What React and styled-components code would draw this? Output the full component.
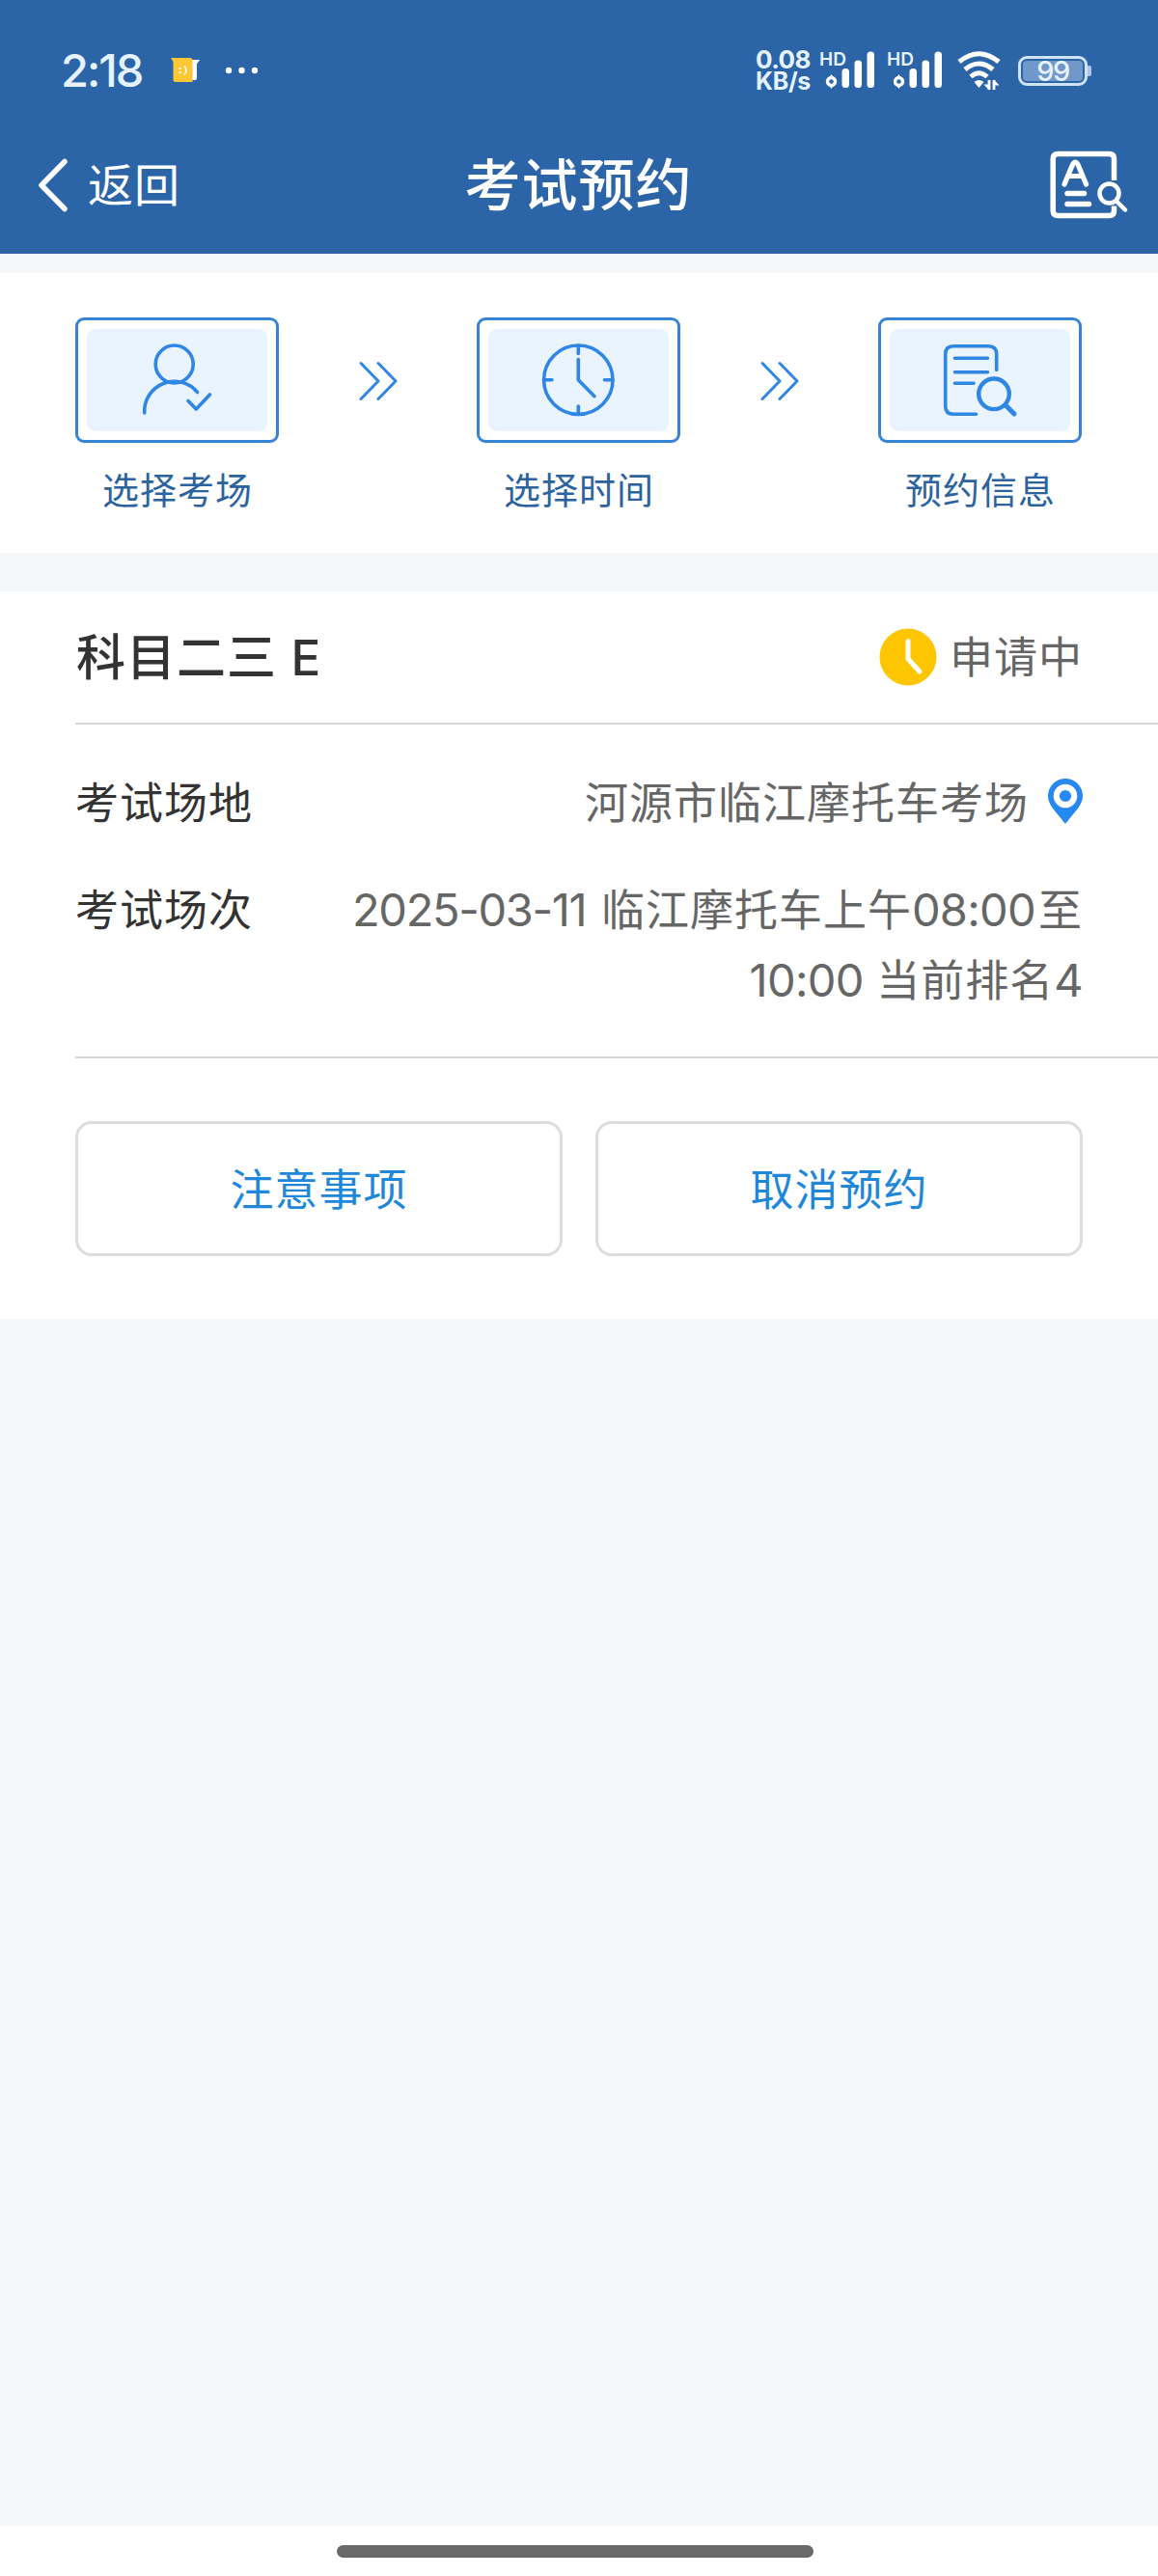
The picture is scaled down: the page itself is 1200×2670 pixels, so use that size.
import React from 'react';
import styled, { createGlobalStyle } from 'styled-components';

const colors = {
  header: '#2b65a8',
  page: '#f4f8fa',
  line: '#d8d8d8',
  icon: '#2f86e4',
  stepText: '#2c639f',
  link: '#1e87d9',
  dark: '#333',
  grey: '#666',
  status: '#e6f2ff',
};

const GlobalStyle = createGlobalStyle`
  * {
    box-sizing: border-box;
  }
  body {
    margin: 0;
    background: ${colors.page};
    font-family: Inter, 'Noto Sans CJK SC', sans-serif;
  }
`;

const Screen = styled.div`
  width: 1200px;
  height: 2670px;
  display: flex;
  flex-direction: column;
  background: ${colors.page};
`;

const Header = styled.header`
  height: 263px;
  background: ${colors.header};
  color: #fff;
`;

const StatusBar = styled.div`
  height: 120px;
  padding: 26px 69px 0 63px;
  display: flex;
  align-items: center;
  color: ${colors.status};
`;

const Time = styled.div`
  width: 114px;
  font-size: 47px;
  font-weight: 500;
  line-height: 50px;
  letter-spacing: -2px;
`;

const Dots = styled.svg`
  margin-left: 26px;
`;

const Speed = styled.div`
  width: 67px;
  margin-left: auto;
  font-size: 26px;
  font-weight: 700;
  line-height: 22px;
`;

const SpeedLine = styled.div`
  font-size: ${({ $size }) => $size}px;
  letter-spacing: ${({ $spacing }) => $spacing}px;
  white-space: nowrap;
`;

const SignalSvg = styled.svg`
  margin-right: ${({ $gap }) => $gap}px;
  overflow: visible;
`;

const Battery = styled.div`
  display: flex;
  align-items: center;
  margin-left: 17px;
`;

const BatteryBody = styled.div`
  width: 72px;
  height: 31px;
  padding: 2px;
  border: 3px solid #cfe3fb;
  border-radius: 9px;
`;

const BatteryLevel = styled.div`
  height: 21px;
  border-radius: 4px;
  background: #7098c8;
  color: ${colors.status};
  font-size: 29px;
  font-weight: 500;
  line-height: 21px;
  letter-spacing: -1.5px;
  text-align: center;
`;

const BatteryCap = styled.div`
  width: 4px;
  height: 11px;
  border-radius: 0 2px 2px 0;
  background: #a9c6e8;
`;

const NavBar = styled.div`
  height: 143px;
  padding: 0 30px 0 38px;
  display: grid;
  grid-template-columns: 1fr auto 1fr;
  align-items: center;
`;

const Back = styled.div`
  display: flex;
  align-items: center;
  gap: 19px;
  font-size: 47px;
  line-height: 60px;
  letter-spacing: 1px;
`;

const Title = styled.h1`
  margin: 0;
  padding-right: 9px;
  font-size: 58px;
  font-weight: 500;
  line-height: 80px;
  letter-spacing: 1px;
`;

const SearchIcon = styled.svg`
  justify-self: end;
`;

const Steps = styled.section`
  height: 290px;
  margin-top: 20px;
  padding: 46px 79px 0 78px;
  display: flex;
  align-items: flex-start;
  justify-content: space-between;
  background: #fff;
`;

const StepItem = styled.div`
  width: 211px;
  text-align: center;
`;

const StepBox = styled.div`
  height: 130px;
  padding: 9px;
  border: 3px solid #3584d6;
  border-radius: 9px;
`;

const StepInner = styled.div`
  height: 106px;
  border-radius: 9px;
  background: #e9f4ff;
`;

const StepLabel = styled.div`
  margin-top: 23px;
  padding-left: 1px;
  color: ${colors.stepText};
  font-size: 38px;
  line-height: 52px;
  letter-spacing: 1px;
  white-space: nowrap;
`;

const Arrows = styled.svg`
  margin-top: 44px;
`;

const Card = styled.section`
  height: 754px;
  margin-top: 40px;
  padding-left: 78px;
  background: #fff;
`;

const CardHead = styled.div`
  height: 138px;
  padding: 2px 78px 0 1px;
  display: flex;
  align-items: center;
  justify-content: space-between;
  border-bottom: 2px solid ${colors.line};
`;

const Subject = styled.h2`
  margin: 0;
  color: ${colors.dark};
  font-size: 51px;
  font-weight: 500;
  line-height: 70px;
  letter-spacing: 1px;
`;

const Status = styled.div`
  display: flex;
  align-items: center;
  gap: 13px;
  color: ${colors.grey};
  font-size: 45px;
  line-height: 60px;
  letter-spacing: 1px;
`;

const StatusIcon = styled.svg`
  margin-bottom: 2px;
`;

const Details = styled.dl`
  height: 346px;
  margin: 0;
  padding: 45px 78px 0 0;
  display: flex;
  flex-direction: column;
  gap: 38px;
  border-bottom: 2px solid ${colors.line};
  font-size: 45px;
  line-height: 73px;
  letter-spacing: 1px;
`;

const DetailRow = styled.div`
  display: flex;
  justify-content: space-between;
`;

const Label = styled.dt`
  color: ${colors.dark};
`;

const Value = styled.dd`
  margin: 0;
  display: flex;
  align-items: center;
  gap: 20px;
  color: ${colors.grey};
`;

const Pin = styled.svg`
  margin-bottom: 4px;
`;

const Session = styled.div`
  line-height: 72px;
  text-align: right;
  white-space: nowrap;
`;

const Num = styled.span`
  margin-right: ${({ $gap = 0 }) => $gap}px;
  font-size: 47px;
  letter-spacing: ${({ $spacing = -0.7 }) => $spacing}px;
`;

const Actions = styled.div`
  padding: 65px 78px 0 0;
  display: grid;
  grid-template-columns: 1fr 1fr;
  gap: 34px;
`;

const ActionButton = styled.button`
  height: 140px;
  padding: 0 0 4px;
  border: 3px solid #dcdcdc;
  border-radius: 17px;
  background: #fff;
  color: ${colors.link};
  font-family: inherit;
  font-size: 45px;
  letter-spacing: 1px;
`;

const HomeBar = styled.footer`
  height: 52px;
  margin-top: auto;
  padding: 20px 8px 0 0;
  background: #fff;
`;

const HomeIndicator = styled.div`
  width: 494px;
  height: 13px;
  margin: 0 auto;
  border-radius: 7px;
  background: #696969;
`;

const NoteIcon = () => (
  <svg width="30" height="26" viewBox="0 0 30 26">
    <path d="M20 2h10l-3 4v15q0 2-2 2h-5z" fill="#fff" />
    <path d="M0 0h20q2.500 0 2.500 2.500V25H5q-2.500 0-2.500-2.500V4z" fill="#fdc834" />
    <path d="M8 11h3M8 15h3M14 8.500q4 4.500 0 9" stroke="#fff" strokeWidth="1.500" fill="none" />
  </svg>
);

const Signal = ({ gap }) => (
  <SignalSvg $gap={gap} width="57" height="42" viewBox="0 0 57 42" fill={colors.status}>
    <text x="-1" y="16" fontSize="19" fontWeight="600">HD</text>
    <circle cx="11.500" cy="32.500" r="4" fill="none" stroke="#fff" strokeWidth="3.400" />
    <path d="M9.500 28l2-3 2 3zM9.500 37l2 3 2-3z" fill="#fff" />
    <g fill="#fff">
      <rect x="22.500" y="19" width="7.500" height="20" rx="3.500" />
      <rect x="35.500" y="10.500" width="7.500" height="28.500" rx="3.500" />
      <rect x="48.500" y="1.500" width="7.500" height="37.500" rx="3.500" />
    </g>
  </SignalSvg>
);

const Wifi = () => (
  <svg width="46" height="42" viewBox="0 0 46 42" fill="none" stroke="#fff" strokeWidth="5">
    <path d="M2 12Q22.500-4.500 43 12" />
    <path d="M8 20Q22.500 8 37 20" />
    <path d="M14 27.500Q22.500 20 31 27.500" />
    <path d="M17.500 33q5-4 10 0l-5 6z" fill="#fff" stroke="none" />
    <path d="M33 31v10M38 41V31" strokeWidth="2.800" />
    <path d="M33 41.500l-5.500-6H33zM38 30.500l5.500 6H38z" fill="#fff" stroke="none" />
  </svg>
);

const DocSearchIcon = () => (
  <SearchIcon width="82" height="72" viewBox="0 0 82 72" fill="none" stroke="#fff" strokeLinecap="round">
    <path
      d="M66.500 31V8.500q0-5-5-5H8.500Q3.200 3.500 3.200 8.500v54q0 5 5.300 5h53q5 0 5-5v-5"
      strokeWidth="5.500"
      strokeLinecap="butt"
    />
    <path
      d="M15 35L23.500 14.500Q26.300 9.500 29 14.500L37.500 35M20 26.500H33"
      strokeWidth="5.200"
      strokeLinejoin="round"
    />
    <path d="M18 44.500h17.500M18 55.500h22.500" strokeWidth="5.500" />
    <circle cx="61.500" cy="44.500" r="10" strokeWidth="4.500" />
    <path d="M69.500 53l8.500 8.500" strokeWidth="4.500" />
  </SearchIcon>
);

const StepIcon = ({ children }) => (
  <svg
    width="187"
    height="106"
    viewBox="0 0 187 106"
    fill="none"
    stroke={colors.icon}
    strokeWidth="3.600"
    strokeLinecap="round"
    strokeLinejoin="round"
  >
    {children}
  </svg>
);

const UserCheck = () => (
  <StepIcon>
    <circle cx="90.700" cy="36.500" r="19.500" />
    <path d="M59.700 87A31 31 0 0 1 114.500 65.500" />
    <path d="M105 74.500l8.300 8.500L127.500 68" />
  </StepIcon>
);

const Clock = () => (
  <StepIcon>
    <circle cx="93.300" cy="52.700" r="35.700" />
    <path d="M93.300 17v8.500M93.300 80v8.500M57.500 52.700h8.500M120.500 52.700h8.500" />
    <path d="M93.300 31.500v21.200l16.700 17" />
  </StepIcon>
);

const FormSearch = () => (
  <StepIcon>
    <path d="M110.700 42.500V26q0-8.300-8.300-8.300H66q-8.300 0-8.300 8.300v54q0 8.300 8.300 8.300h23.500" />
    <path d="M67.500 30.200h34M67.500 44.700h34M67.500 56.200h19.500" />
    <circle cx="108" cy="67.300" r="15.800" strokeWidth="4.400" />
    <path d="M120 79l9 9" strokeWidth="5" />
  </StepIcon>
);

const DoubleArrow = () => (
  <Arrows
    width="42"
    height="42"
    viewBox="0 0 42 42"
    fill="none"
    stroke={colors.icon}
    strokeWidth="3"
    strokeLinecap="round"
    strokeLinejoin="round"
  >
    <path d="M3 3.500l18 18.500L3 40.500M21 3.500l18 18.500L21 40.500" />
  </Arrows>
);

const PendingIcon = () => (
  <StatusIcon width="60" height="60" viewBox="0 0 60 60">
    <circle cx="30" cy="30" r="29.500" fill="#fec600" />
    <path
      d="M30 13.500V32l12 13"
      fill="none"
      stroke="#fff"
      strokeWidth="5"
      strokeLinecap="round"
      strokeLinejoin="round"
    />
  </StatusIcon>
);

const PinIcon = () => (
  <Pin width="36" height="47" viewBox="0 0 36 47">
    <path d="M18 0A18 18 0 0 0 0 18C0 27 7 33 18 47C29 33 36 27 36 18A18 18 0 0 0 18 0z" fill="#2688f0" />
    <circle cx="18" cy="18" r="9.200" fill="none" stroke="#fff" strokeWidth="6.200" />
  </Pin>
);

const Step = ({ icon, label }) => (
  <StepItem>
    <StepBox>
      <StepInner>{icon}</StepInner>
    </StepBox>
    <StepLabel>{label}</StepLabel>
  </StepItem>
);

export default function App() {
  return (
    <Screen lang="zh-CN">
      <GlobalStyle />
      <Header>
        <StatusBar>
          <Time>2:18</Time>
          <NoteIcon />
          <Dots width="34" height="8" viewBox="0 0 34 8" fill="#fff">
            <circle cx="4" cy="4" r="3.200" />
            <circle cx="17.500" cy="4" r="3.200" />
            <circle cx="31" cy="4" r="3.200" />
          </Dots>
          <Speed>
            <SpeedLine $size={26} $spacing={-0.6}>0.08</SpeedLine>
            <SpeedLine $size={25} $spacing={-0.3}>KB/s</SpeedLine>
          </Speed>
          <Signal gap={13} />
          <Signal gap={15} />
          <Wifi />
          <Battery>
            <BatteryBody>
              <BatteryLevel>99</BatteryLevel>
            </BatteryBody>
            <BatteryCap />
          </Battery>
        </StatusBar>
        <NavBar>
          <Back>
            <svg width="34" height="56" viewBox="0 0 34 56" fill="none" stroke="#fff" strokeWidth="5.500">
              <path d="M29 3.500L5 28l24 24.500" strokeLinecap="round" strokeLinejoin="round" />
            </svg>
            返回
          </Back>
          <Title>考试预约</Title>
          <DocSearchIcon />
        </NavBar>
      </Header>

      <Steps>
        <Step icon={<UserCheck />} label="选择考场" />
        <DoubleArrow />
        <Step icon={<Clock />} label="选择时间" />
        <DoubleArrow />
        <Step icon={<FormSearch />} label="预约信息" />
      </Steps>

      <Card>
        <CardHead>
          <Subject>科目二三 E</Subject>
          <Status>
            <PendingIcon />
            申请中
          </Status>
        </CardHead>
        <Details>
          <DetailRow>
            <Label>考试场地</Label>
            <Value>
              河源市临江摩托车考场
              <PinIcon />
            </Value>
          </DetailRow>
          <DetailRow>
            <Label>考试场次</Label>
            <Value>
              <Session>
                <Num $spacing={-1.35} $gap={2}>2025-03-11</Num> 临江摩托车上午<Num $gap={3}>08:00</Num>至
                <br />
                <Num>10:00</Num> 当前排名<Num>4</Num>
              </Session>
            </Value>
          </DetailRow>
        </Details>
        <Actions>
          <ActionButton>注意事项</ActionButton>
          <ActionButton>取消预约</ActionButton>
        </Actions>
      </Card>

      <HomeBar>
        <HomeIndicator />
      </HomeBar>
    </Screen>
  );
}
